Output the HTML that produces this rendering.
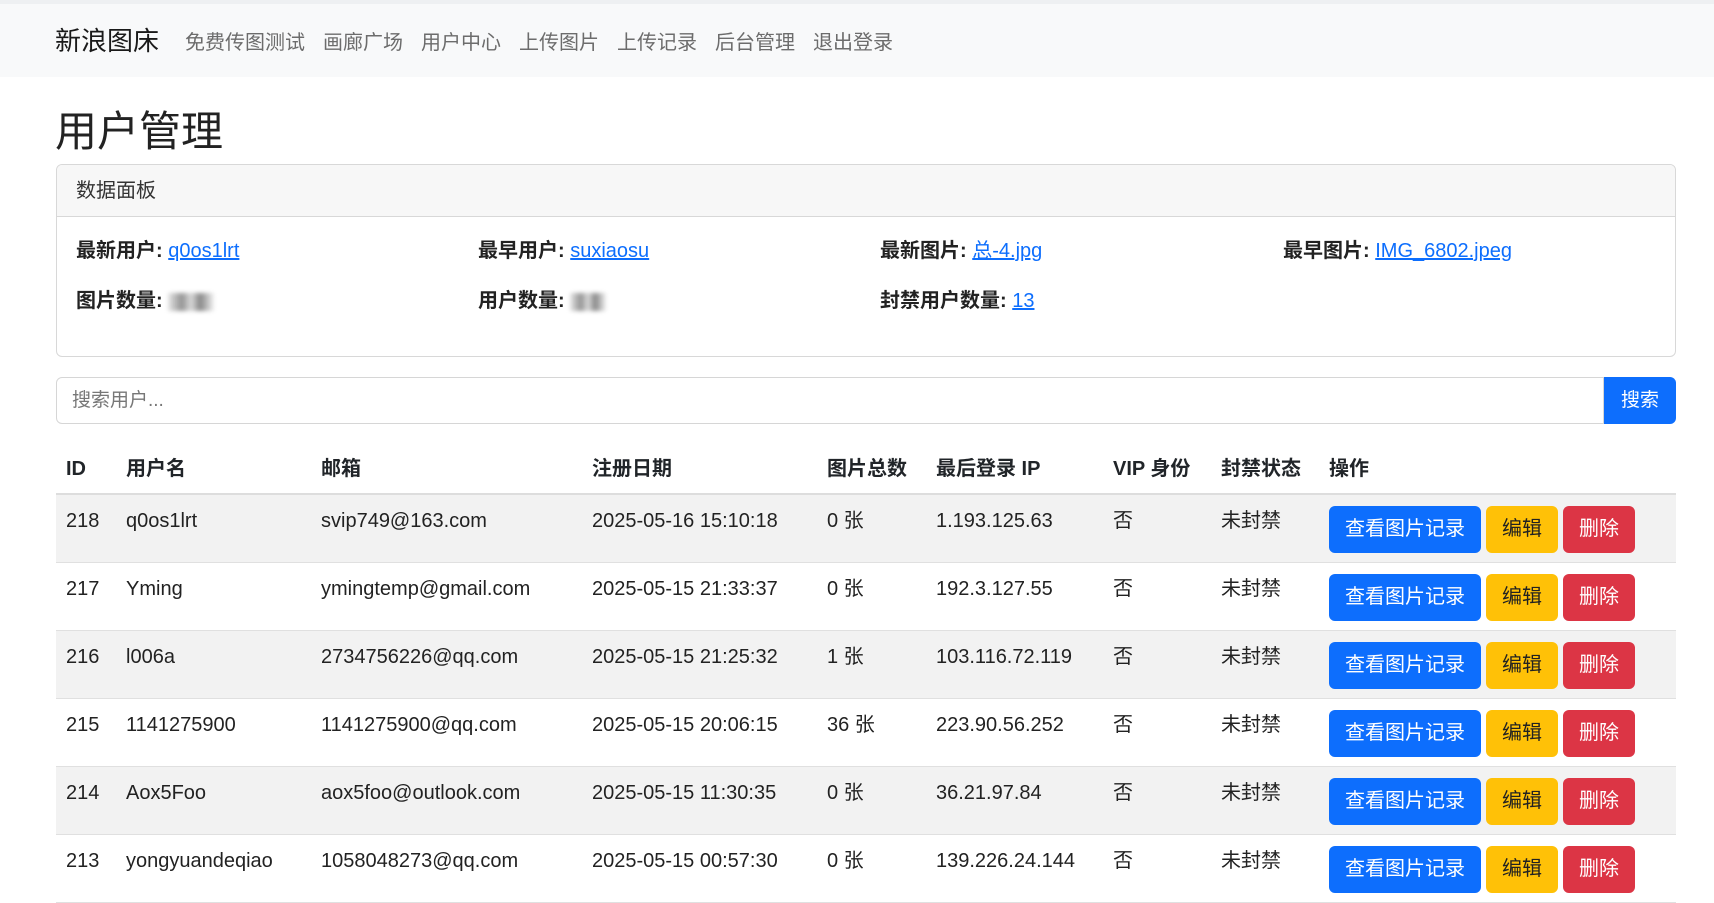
<!DOCTYPE html>
<html><head><meta charset="utf-8"><style>
*{box-sizing:border-box;margin:0;padding:0}
body{width:1714px;height:892px;overflow:hidden;background:#fff;font-family:"Liberation Sans","Noto Sans CJK SC",sans-serif;color:#212529;position:relative}
.nav{position:absolute;left:0;top:0;width:1714px;height:77px;background:#f8f9fa;border-top:4px solid #eef0f2}
.brand{position:absolute;left:55px;top:20px;font-size:26px;line-height:34px;color:#1a1a1a}
.links{position:absolute;left:185px;top:25px;font-size:20px;line-height:28px;color:#6c6c6c}
.links span{margin-right:18px}
h1{position:absolute;left:55px;top:105px;font-size:42px;line-height:54px;font-weight:400;color:#222}
.card{position:absolute;left:56px;top:164px;width:1620px;height:193px;border:1px solid #d8d8d8;border-radius:6px;overflow:hidden}
.ch{height:52px;background:#f7f7f7;border-bottom:1px solid #d8d8d8;font-size:20px;line-height:28px;padding:12px 19px;color:#333}
.it{position:absolute;font-size:20px;line-height:28px;color:#222}
.it b{font-weight:700}
.it a{color:#0d6efd;text-decoration:underline}
.blur{display:inline-block;width:46px;height:18px;vertical-align:middle;background:linear-gradient(90deg,#ddd,#666 30%,#ccc 50%,#555 70%,#eee);filter:blur(2px);opacity:.7}
.search{position:absolute;left:56px;top:377px;width:1548px;height:47px;border:1px solid #d6d6d6;border-radius:6px 0 0 6px;font-size:19px;line-height:24px;color:#777;padding:11px 15px}
.sbtn{position:absolute;left:1604px;top:377px;width:72px;height:47px;background:#0d6efd;border-radius:0 6px 6px 0;color:#fff;font-size:19px;text-align:center;line-height:47px}
table{position:absolute;left:56px;top:444px;width:1620px;border-collapse:collapse;font-size:20px;line-height:28px;table-layout:fixed}
th{text-align:left;font-weight:700;height:50px;padding-left:10px;border-bottom:2px solid #ddd;vertical-align:middle}
td{height:68px;padding-left:10px;border-bottom:1px solid #e0e0e0;vertical-align:top;padding-top:12px;color:#222}
tr.s td{background:#f2f2f2}
.b{display:inline-block;height:47px;line-height:47px;border-radius:6px;font-size:20px;text-align:center;margin-top:-1px;vertical-align:top}
.bv{width:152px;background:#0d6efd;color:#fff}
.be{width:72px;background:#ffc107;color:#222;margin-left:5px}
.bd{width:72px;background:#dc3545;color:#fff;margin-left:5px}
</style></head><body>
<div class="nav"><div class="brand">新浪图床</div><div class="links"><span>免费传图测试</span><span>画廊广场</span><span>用户中心</span><span>上传图片</span><span>上传记录</span><span>后台管理</span><span>退出登录</span></div></div>
<h1>用户管理</h1>
<div class="card"><div class="ch">数据面板</div>
<div class="it" style="left:19px;top:72px"><b>最新用户:</b> <a>q0os1lrt</a></div>
<div class="it" style="left:421px;top:72px"><b>最早用户:</b> <a>suxiaosu</a></div>
<div class="it" style="left:823px;top:72px"><b>最新图片:</b> <a>总-4.jpg</a></div>
<div class="it" style="left:1226px;top:72px"><b>最早图片:</b> <a>IMG_6802.jpeg</a></div>
<div class="it" style="left:19px;top:122px"><b>图片数量:</b> <span class="blur"></span></div>
<div class="it" style="left:421px;top:122px"><b>用户数量:</b> <span class="blur" style="width:36px"></span></div>
<div class="it" style="left:823px;top:122px"><b>封禁用户数量:</b> <a>13</a></div>
</div>
<div class="search">搜索用户...</div><div class="sbtn">搜索</div>
<table>
<colgroup><col style="width:60px"><col style="width:195px"><col style="width:271px"><col style="width:235px"><col style="width:109px"><col style="width:177px"><col style="width:108px"><col style="width:108px"><col></colgroup>
<tr><th>ID</th><th>用户名</th><th>邮箱</th><th>注册日期</th><th>图片总数</th><th>最后登录 IP</th><th>VIP 身份</th><th>封禁状态</th><th>操作</th></tr>
<tr class="s"><td>218</td><td>q0os1lrt</td><td>svip749@163.com</td><td>2025-05-16 15:10:18</td><td>0 张</td><td>1.193.125.63</td><td>否</td><td>未封禁</td><td><span class="b bv">查看图片记录</span><span class="b be">编辑</span><span class="b bd">删除</span></td></tr>
<tr><td>217</td><td>Yming</td><td>ymingtemp@gmail.com</td><td>2025-05-15 21:33:37</td><td>0 张</td><td>192.3.127.55</td><td>否</td><td>未封禁</td><td><span class="b bv">查看图片记录</span><span class="b be">编辑</span><span class="b bd">删除</span></td></tr>
<tr class="s"><td>216</td><td>l006a</td><td>2734756226@qq.com</td><td>2025-05-15 21:25:32</td><td>1 张</td><td>103.116.72.119</td><td>否</td><td>未封禁</td><td><span class="b bv">查看图片记录</span><span class="b be">编辑</span><span class="b bd">删除</span></td></tr>
<tr><td>215</td><td>1141275900</td><td>1141275900@qq.com</td><td>2025-05-15 20:06:15</td><td>36 张</td><td>223.90.56.252</td><td>否</td><td>未封禁</td><td><span class="b bv">查看图片记录</span><span class="b be">编辑</span><span class="b bd">删除</span></td></tr>
<tr class="s"><td>214</td><td>Aox5Foo</td><td>aox5foo@outlook.com</td><td>2025-05-15 11:30:35</td><td>0 张</td><td>36.21.97.84</td><td>否</td><td>未封禁</td><td><span class="b bv">查看图片记录</span><span class="b be">编辑</span><span class="b bd">删除</span></td></tr>
<tr><td>213</td><td>yongyuandeqiao</td><td>1058048273@qq.com</td><td>2025-05-15 00:57:30</td><td>0 张</td><td>139.226.24.144</td><td>否</td><td>未封禁</td><td><span class="b bv">查看图片记录</span><span class="b be">编辑</span><span class="b bd">删除</span></td></tr>
</table>
</body></html>
